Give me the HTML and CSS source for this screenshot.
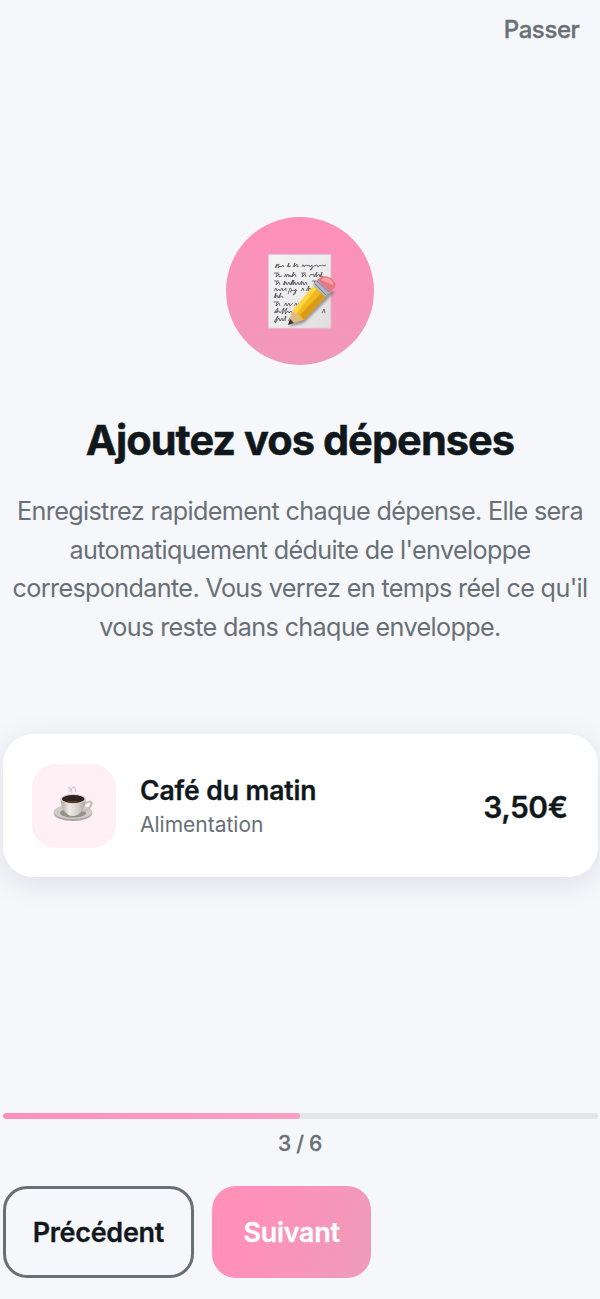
FILE: index.html
```html
<!DOCTYPE html>
<html lang="fr">
<head>
<meta charset="utf-8">
<title>Ajoutez vos dépenses</title>
<link rel="stylesheet" href="styles.css">
</head>
<body>
<div class="screen">
  <header class="top"><a class="skip">Passer</a></header>
  <main class="content">
    <div class="hero">
      <svg class="memo" viewBox="0 0 90 90" aria-hidden="true">
        <defs>
          <linearGradient id="paper" x1="0" y1="0" x2="1" y2="1"><stop offset="0" stop-color="#f5f4f5"/><stop offset=".5" stop-color="#ededee"/><stop offset="1" stop-color="#dedcdd"/></linearGradient>
          <filter id="soft" x="-30%" y="-30%" width="160%" height="160%"><feGaussianBlur stdDeviation="1.2"/></filter>
        </defs>
        <rect x="13.3" y="9.4" width="62.6" height="73.8" fill="url(#paper)" stroke="#d5c7ce" stroke-width=".7"/>
        <g class="scribble">
          <path d="M20 23l2-4-1 4m0-2l3-2-1 4 2-2 1 1 2-2 1 2M32 22l2-4-1 4 3-1M38 22l2-4-1 4 3-3 0 3 2-1M47 22q0-3 2-2l0 2 2-2 2 1 1-1 1 2 2-2 0 4-2 1 4-4 3-1 1 2 2-2 1 1 2-1 1 1 2-1"/>
          <path d="M19 28h5m-2 0l-1 4 3-3 0 3 3-1M29 32l2-3 0 3 2-3 1 3 1-2 1 2 3-5-2 5 3-3 1 3M46 28h5m-3 0l-1 4 3-3 1 3M54 32l2-3 1 1 2-1 0 3 3-5-1 5 3-3 1 3 2-5-1 5 2-1"/>
          <path d="M19 36h5m-2 0l-1 4 3-3 1 3M28 40l2-4-1 4 2-3 1 3 2-3 1 3 3-5-2 5 3-5-1 5 2-3 1 3 2-3 1 3 3-4-1 4 2-3 1 3 2-3 1 3M57 36h5m-2 0l-1 4 3-3 1 3"/>
          <path d="M19 46l2-3 1 3 2-2 1 2 2-3 1 3 3-3 0 3M33 49l2-6 2 2-2 2 3-2 1 1 2-2-1 5-2 1 4-5M46 46l2-3 1 3M51 46l3-5-1 5 2-3 1 3 3-2"/>
          <path d="M19 53l2-5-1 5 2-3 1 3 3-5-2 5 3-2 1 2"/>
          <path d="M19 57h5m-2 0l-1 4 3-3 1 3M29 61l2-3 1 3 2-3 1 3 3-3M39 61l2-3 1 3 2-3 1 3"/>
          <path d="M19 68l4-5-1 5-2-1 4-1 1 2 4-5-2 6 5-6-2 6 3-3 1 2 2-2 1 2M67 68l2-4 1 4"/>
          <path d="M19 77l4-6-3 7 4-5 1 3 2-3 1 3 3-5-1 5M33 76l2-3 1 2"/>
        </g>
        <path d="M34 82L68 44 80 47 49 78Z" fill="#685a52" opacity=".55" filter="url(#soft)"/>
        <path d="M37 66L33 80 48 75 48 69Z" fill="#ddb983"/>
        <path d="M38 67L60 41 71 51 49 75 45 74 43 69Z" fill="#f2b91e"/>
        <path d="M37 66L58 41 62 43 41 69Z" fill="#ffd646"/>
        <path d="M45 70L67 47 71 51 49 75Z" fill="#d99a18"/>
        <path d="M33 80L35 74 39 78Z" fill="#30343a"/>
        <path d="M58 40L62 35 75 47 70 52Z" fill="#aeb4c2"/>
        <path d="M60 39L71 50M62 36L74 47" stroke="#71798b" stroke-width=".9"/>
        <path d="M62 35L66 32Q70 30 76 33Q82 38 80 42L75 47Z" fill="#e77785"/>
        <path d="M66 35Q70 31 75 34Q79 37 78 40Z" fill="#f7a0a3"/>
      </svg>
    </div>
    <h1 class="title">Ajoutez vos dépenses</h1>
    <p class="description">Enregistrez rapidement chaque dépense. Elle sera<br>automatiquement déduite de l'enveloppe<br>correspondante. Vous verrez en temps réel ce qu'il<br>vous reste dans chaque enveloppe.</p>
    <section class="card">
      <div class="tile">
        <svg class="coffee" viewBox="0 0 44 44" aria-hidden="true">
          <defs><linearGradient id="cup" x1="0" x2="1"><stop offset="0" stop-color="#aaa69d"/><stop offset=".35" stop-color="#eeece5"/><stop offset=".7" stop-color="#d2cec5"/><stop offset="1" stop-color="#aaa59b"/></linearGradient></defs>
          <path d="M17 5l3 2 3-2 2 2M18 10l2-3 1 4M24 7l1 3" fill="none" stroke="#a99bad" stroke-width="1.3" opacity=".45"/>
          <ellipse cx="22" cy="31" rx="19.3" ry="8" fill="#aaa79f"/>
          <ellipse cx="22" cy="29.8" rx="19.3" ry="7.2" fill="#cfccc5"/>
          <ellipse cx="22" cy="31" rx="13" ry="4.5" fill="#969189"/>
          <path d="M33 22Q41 17 40.5 22Q39 28 31 29" fill="none" stroke="#c5c1b9" stroke-width="2.2"/>
          <path d="M9.5 17C10 27 15 34 22 34S34 27 35 17Z" fill="url(#cup)"/>
          <ellipse cx="22.2" cy="17" rx="12.8" ry="5" fill="#d5d2ca"/>
          <ellipse cx="22.2" cy="17" rx="11.3" ry="4" fill="#30221d"/>
          <path d="M14 18.5q8 3.5 16 0-8 1-16 0" fill="#69442f"/>
        </svg>
      </div>
      <div class="details"><div class="name">Café du matin</div><div class="category">Alimentation</div></div>
      <div class="amount">3,50€</div>
    </section>
  </main>
  <footer class="footer">
    <div class="track"><div class="fill"></div></div>
    <div class="counter">3 / 6</div>
    <div class="actions"><button class="btn previous">Précédent</button><button class="btn next">Suivant</button></div>
  </footer>
</div>
</body>
</html>
```
FILE: styles.css
```css
* { box-sizing: border-box; }
body { margin: 0; background: #f6f7fb; color: #11181c; font-family: Inter, "Liberation Sans", sans-serif; }
.screen { height: 1299px; display: flex; flex-direction: column; overflow: hidden; padding: 0 2.5px 21.5px; }
.top { height: 59px; display: flex; align-items: center; justify-content: flex-end; padding-right: 18px; }
.skip { font-size: 24px; font-weight: 500; letter-spacing: -.4px; color: #687076; -webkit-text-stroke: .35px #687076; }
.content { display: flex; flex-direction: column; align-items: center; padding-top: 157.5px; }
.hero { width: 148.5px; height: 148.5px; border-radius: 50%; background: linear-gradient(#ff90b8, #f199ba); display: flex; align-items: center; justify-content: center; }
.memo { width: 90px; height: 90px; margin-bottom: 1px; }
.scribble { fill: none; stroke: #343238; stroke-width: .65; stroke-linejoin: round; }
.title { margin: 50px 0 0; font-size: 41.5px; line-height: 50px; font-weight: 700; letter-spacing: -.95px; white-space: nowrap; -webkit-text-stroke: .5px #11181c; }
.description { margin: 27px 0 0; font-size: 25.2px; line-height: 38.7px; letter-spacing: -.65px; color: #687076; text-align: center; white-space: nowrap; }
.card { width: 100%; height: 143px; margin-top: 87.5px; padding: 0 30px 0 29.5px; display: flex; align-items: center; border-radius: 30px; background: #fff; box-shadow: 0 6px 30px rgba(20, 20, 45, .1); }
.tile { width: 84px; height: 84px; border-radius: 24px; background: #fff0f5; display: flex; align-items: center; justify-content: center; }
.coffee { width: 44px; height: 44px; margin-right: 2px; margin-bottom: 3px; }
.details { margin-left: 24px; margin-top: 3px; flex: 1; }
.name { font-size: 26.5px; line-height: 35px; font-weight: 600; letter-spacing: -.1px; -webkit-text-stroke: .3px #11181c; }
.category { font-size: 21px; line-height: 33px; color: #687076; }
.amount { font-size: 30px; font-weight: 600; letter-spacing: -.5px; margin-top: 2px; -webkit-text-stroke: .3px #11181c; }
.footer { margin-top: auto; }
.track { height: 6px; border-radius: 3px; background: #e2e5e8; overflow: hidden; }
.fill { width: 50%; height: 100%; border-radius: 3px; background: linear-gradient(90deg, #ff90b8, #f9a0c0); }
.counter { margin-top: 9px; height: 32px; line-height: 32px; text-align: center; font-size: 21px; font-weight: 500; letter-spacing: -.3px; color: #687076; -webkit-text-stroke: .3px #687076; }
.actions { display: flex; gap: 17.7px; margin-top: 26.5px; }
.btn { height: 91.5px; padding: 2px 0 0; border: 0; border-radius: 24px; font: 600 27px Inter, sans-serif; letter-spacing: -.3px; }
.previous { width: 191.7px; border: 3px solid #687076; background: transparent; color: #11181c; -webkit-text-stroke: .3px #11181c; }
.next { width: 159.5px; color: #fff; background: linear-gradient(110deg, #ff90b8 25%, #f199ba 85%); -webkit-text-stroke: .3px #fff; }
```
